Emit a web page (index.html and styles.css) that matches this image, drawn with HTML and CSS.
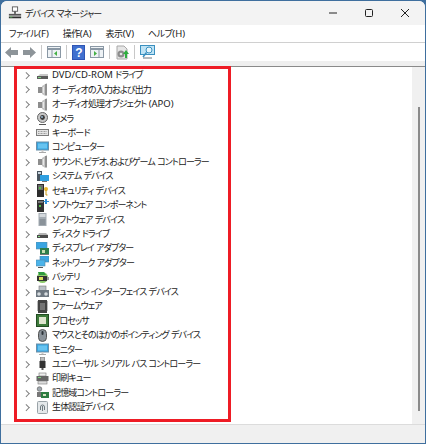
FILE: index.html
```html
<!DOCTYPE html>
<html lang="ja">
<head>
<meta charset="utf-8">
<title>デバイス マネージャー</title>
<link rel="stylesheet" href="styles.css">
</head>
<body>
<svg class="defs" width="0" height="0">
<defs>
<symbol id="i-drive" viewBox="0 0 13 13"><path d="M1 8l3-3h8v2z" fill="#c9c9c9"/><rect x="1" y="7" width="11" height="3" fill="#5c5c5c"/><rect x="2" y="8" width="3" height="1" fill="#7fd07f"/></symbol>
<symbol id="i-speaker" viewBox="0 0 13 13"><rect x="2" y="4" width="4" height="6" fill="#8d8d8d"/><path d="M6 3l5-3v14l-5-3z" fill="#c4c4c4"/><path d="M10 1v11" stroke="#6f6f6f" stroke-width="1.200"/><path d="M7.500 4v6" stroke="#e8e8e8"/></symbol>
<symbol id="i-camera" viewBox="0 0 13 13"><circle cx="6.500" cy="5.500" r="5" fill="#c8c8c8" stroke="#666"/><circle cx="6.500" cy="5.500" r="2.400" fill="#3a3a3a"/><circle cx="6" cy="5" r=".9" fill="#9fc3e0"/><path d="M3 12h7v1H3z" fill="#555"/></symbol>
<symbol id="i-keyboard" viewBox="0 0 13 13"><rect x=".5" y="3.500" width="12" height="6" fill="#e4e4e4" stroke="#7b7b7b"/><path d="M2 5.500h9M2 7.500h9" stroke="#9d9d9d" stroke-dasharray="1 .5"/></symbol>
<symbol id="i-monitor" viewBox="0 0 13 13"><rect x=".5" y="1" width="12" height="8" fill="#37a4e0" stroke="#6b8fa8"/><rect x="2" y="2.500" width="9" height="5" fill="#67c3f0"/><path d="M3 11h7v1H3z" fill="#a9a9a9"/><path d="M5.500 9h2v2h-2z" fill="#c9c9c9"/></symbol>
<symbol id="i-system" viewBox="0 0 13 13"><rect x="1" y="1" width="5" height="10" fill="#4a5560"/><rect x="2" y="2" width="3" height="2" fill="#c9d6df"/><rect x="4" y="5" width="9" height="6" fill="#2f9fe0"/><rect x="6" y="11" width="5" height="1" fill="#777"/></symbol>
<symbol id="i-security" viewBox="0 0 13 13"><rect x="1" y="0" width="7" height="13" fill="#2d2d2d"/><rect x="2" y="1" width="5" height="5" fill="#6c6c6c"/><rect x="3" y="3" width="2" height="2" fill="#55c04a"/><circle cx="10" cy="5" r="2" fill="#e7b52c"/><path d="M10 6v5h1.500" stroke="#c99a18" fill="none"/></symbol>
<symbol id="i-softcomp" viewBox="0 0 13 13"><rect x="1" y="1" width="7" height="12" fill="#333"/><rect x="2" y="2" width="5" height="2" fill="#777"/><rect x="3" y="6" width="2" height="2" fill="#55c04a"/><path d="M9 0h2v2h2v1h-2v2H9V3H7.500V2H9z" fill="#2f8fd8"/></symbol>
<symbol id="i-softdev" viewBox="0 0 13 13"><rect x="2.500" y="0" width="8" height="13" fill="#a3abb2"/><rect x="3.500" y="1" width="6" height="3" fill="#d3d8dc"/><rect x="3.500" y="6" width="6" height="6" fill="#8a9299"/></symbol>
<symbol id="i-disk" viewBox="0 0 13 13"><path d="M2 7l1-2h7l2 2z" fill="#b5b5b5"/><rect x="1" y="7" width="11" height="3" fill="#4b4b4b"/><rect x="2" y="8" width="2" height="1" fill="#86d886"/></symbol>
<symbol id="i-display" viewBox="0 0 13 13"><rect x="0" y="0" width="11" height="7" fill="#3aa5e2" stroke="#5d8aa6" stroke-width=".6"/><rect x="4" y="6" width="9" height="6" fill="#2e7d4a"/><rect x="6" y="8" width="3" height="3" fill="#c8dcb0"/><path d="M4 12h9v1H4z" fill="#777"/></symbol>
<symbol id="i-network" viewBox="0 0 13 13"><rect x="4" y="0" width="9" height="6" fill="#3aa5e2" stroke="#4f86a8" stroke-width=".6"/><rect x="0" y="4" width="9" height="6" fill="#4cb4ea" stroke="#4f86a8" stroke-width=".6"/><path d="M2 11h5v1H2z" fill="#555"/></symbol>
<symbol id="i-battery" viewBox="0 0 13 13"><circle cx="6.500" cy="6.500" r="5.500" fill="#8cc96b"/><path d="M2 1h6l2 3H3z" fill="#2f9a3e"/><rect x="1" y="5" width="10" height="5" fill="#333"/><rect x="11" y="6" width="2" height="3" fill="#999"/><rect x="3" y="6" width="4" height="3" fill="#d8e05a"/></symbol>
<symbol id="i-hid" viewBox="0 0 13 13"><rect x="3" y="1" width="7" height="5" fill="#b9c0c6" stroke="#777" stroke-width=".6"/><rect x="0" y="5" width="13" height="7" fill="#6d7780"/><circle cx="3" cy="9" r="1.800" fill="#d8dde0"/><circle cx="10" cy="9" r="1.800" fill="#d8dde0"/></symbol>
<symbol id="i-firmware" viewBox="0 0 13 13"><rect x="2" y="0" width="9" height="13" fill="#444"/><path d="M1 2h1M1 4h1M1 6h1M1 8h1M1 10h1M11 2h1M11 4h1M11 6h1M11 8h1M11 10h1" stroke="#777"/><rect x="4" y="3" width="5" height="7" fill="#757575"/></symbol>
<symbol id="i-cpu" viewBox="0 0 13 13"><rect x=".5" y=".5" width="12" height="12" fill="#3e7b3b" stroke="#224c22"/><rect x="3" y="3" width="7" height="7" fill="#dfe6cf"/></symbol>
<symbol id="i-mouse" viewBox="0 0 13 13"><rect x="2.500" y=".5" width="8" height="12" rx="4" fill="#8b939a" stroke="#555"/><rect x="5.500" y="2" width="2" height="4" rx="1" fill="#2c3338"/></symbol>
<symbol id="i-usb" viewBox="0 0 13 13"><rect x="4.500" y="0" width="4" height="4" fill="#bbb" stroke="#666" stroke-width=".6"/><rect x="3.500" y="4" width="6" height="7" fill="#333"/><rect x="5.500" y="11" width="2" height="2" fill="#555"/></symbol>
<symbol id="i-printer" viewBox="0 0 13 13"><rect x="3" y="1" width="7" height="3" fill="#eee" stroke="#777" stroke-width=".6"/><rect x=".5" y="4" width="12" height="5" fill="#666"/><rect x="2" y="5" width="3" height="1" fill="#7cd07c"/><rect x="2" y="9" width="9" height="3" fill="#ddd" stroke="#777" stroke-width=".6"/></symbol>
<symbol id="i-storage" viewBox="0 0 13 13"><circle cx="3.500" cy="3" r="2.300" fill="#a0a8ae" stroke="#555" stroke-width=".6"/><path d="M1 6h5v5H1z" fill="#777"/><rect x="5" y="6" width="8" height="6" fill="#2f7d42"/><rect x="7" y="8" width="3" height="2" fill="#d8e4c4"/></symbol>
<symbol id="i-bio" viewBox="0 0 13 13"><rect x="1.500" y=".5" width="10" height="12" rx="1" fill="#e4e8ea" stroke="#9aa3a8"/><path d="M4.500 9V6a2 2 0 0 1 4 0v3M6.500 5v5" stroke="#6f7a80" fill="none"/></symbol>
</defs>
</svg>
<div class="window">
  <header class="titlebar">
    <svg class="appicon" width="14" height="14" viewBox="0 0 16 16"><rect x="5" y="1" width="6" height="5" fill="#fff" stroke="#555"/><rect x="7" y="6" width="2" height="3" fill="#555"/><rect x="1" y="9" width="14" height="2" fill="#555"/><rect x="1" y="12" width="14" height="2" fill="#2f2f2f"/><rect x="2" y="12" width="3" height="1" fill="#6fcf6f"/></svg>
    <span class="title">デバイス マネージャー</span>
    <div class="winbtns">
      <svg width="10" height="10" viewBox="0 0 10 10"><path d="M1 5h8" stroke="#222" stroke-width="1"/></svg>
      <svg width="10" height="10" viewBox="0 0 10 10"><rect x="1.500" y="1.500" width="7" height="7" rx="1" fill="none" stroke="#222"/></svg>
      <svg width="10" height="10" viewBox="0 0 10 10"><path d="M1 1l8 8M9 1l-8 8" stroke="#222"/></svg>
    </div>
  </header>
  <nav class="menubar">
    <span>ファイル<b>(F)</b></span><span>操作<b>(A)</b></span><span>表示<b>(V)</b></span><span>ヘルプ<b>(H)</b></span>
  </nav>
  <div class="toolbar">
    <svg width="13" height="11" viewBox="0 0 13 11"><path d="M6 0v3h7v5H6v3L0 5.500z" fill="#8d9499"/></svg>
    <svg width="13" height="11" viewBox="0 0 13 11"><path d="M7 0v3H0v5h7v3l6-5.500z" fill="#8d9499"/></svg>
    <i class="sep"></i>
    <svg width="14" height="12" viewBox="0 0 14 12"><rect x=".5" y=".5" width="13" height="11" fill="#eef2f5" stroke="#8a98a5"/><path d="M1 3h12" stroke="#8a98a5" stroke-width="2"/><path d="M5 4v7" stroke="#8a98a5"/><path d="M10 5v5L7 7.500z" fill="#45b045"/></svg>
    <i class="sep"></i>
    <svg width="13" height="15" viewBox="0 0 13 15"><rect width="13" height="15" fill="#2f55b5"/><rect x="1" y="1" width="11" height="13" fill="#4070cf"/><text class="qmark" x="6.500" y="12" text-anchor="middle">?</text></svg>
    <svg width="14" height="12" viewBox="0 0 14 12"><rect x=".5" y=".5" width="13" height="11" fill="#eef2f5" stroke="#8a98a5"/><path d="M1 3h12" stroke="#8a98a5" stroke-width="2"/><path d="M9 4v7" stroke="#8a98a5"/><path d="M4 5v5l3-2.500z" fill="#45b045"/></svg>
    <i class="sep"></i>
    <svg width="14" height="15" viewBox="0 0 14 15"><path d="M2 1h7l3 3v10H2z" fill="#e6e6e6" stroke="#a8a8a8"/><circle cx="6" cy="9" r="3.500" fill="#8c8c8c"/><circle cx="6" cy="9" r="1.300" fill="#e6e6e6"/><path d="M11 5l3 4h-2v4h-2V9H8z" fill="#2fae3f"/></svg>
    <i class="sep"></i>
    <svg width="15" height="14" viewBox="0 0 15 14"><rect x=".5" y=".5" width="14" height="9" fill="#bfe3f5" stroke="#3a90c0"/><circle cx="9" cy="5" r="3" fill="#e8f6fc" stroke="#3a90c0"/><path d="M6.500 7.500L3 12" stroke="#3a90c0" stroke-width="1.500"/><path d="M3 13h9" stroke="#6b7780"/></svg>
  </div>
  <div class="strip"></div>
  <main class="content">
    <ul class="tree">
      <li><span class="chev"></span><svg class="ico"><use href="#i-drive"/></svg><span><b>DVD/CD-ROM</b> ドライブ</span></li>
      <li><span class="chev"></span><svg class="ico"><use href="#i-speaker"/></svg>オーディオの入力および出力</li>
      <li><span class="chev"></span><svg class="ico"><use href="#i-speaker"/></svg><span>オーディオ処理オブジェクト <b>(APO)</b></span></li>
      <li><span class="chev"></span><svg class="ico"><use href="#i-camera"/></svg>カメラ</li>
      <li><span class="chev"></span><svg class="ico"><use href="#i-keyboard"/></svg>キーボード</li>
      <li><span class="chev"></span><svg class="ico"><use href="#i-monitor"/></svg>コンピューター</li>
      <li><span class="chev"></span><svg class="ico"><use href="#i-speaker"/></svg>サウンド、ビデオ、およびゲーム コントローラー</li>
      <li><span class="chev"></span><svg class="ico"><use href="#i-system"/></svg>システム デバイス</li>
      <li><span class="chev"></span><svg class="ico"><use href="#i-security"/></svg>セキュリティ デバイス</li>
      <li><span class="chev"></span><svg class="ico"><use href="#i-softcomp"/></svg>ソフトウェア コンポーネント</li>
      <li><span class="chev"></span><svg class="ico"><use href="#i-softdev"/></svg>ソフトウェア デバイス</li>
      <li><span class="chev"></span><svg class="ico"><use href="#i-disk"/></svg>ディスク ドライブ</li>
      <li><span class="chev"></span><svg class="ico"><use href="#i-display"/></svg>ディスプレイ アダプター</li>
      <li><span class="chev"></span><svg class="ico"><use href="#i-network"/></svg>ネットワーク アダプター</li>
      <li><span class="chev"></span><svg class="ico"><use href="#i-battery"/></svg>バッテリ</li>
      <li><span class="chev"></span><svg class="ico"><use href="#i-hid"/></svg>ヒューマン インターフェイス デバイス</li>
      <li><span class="chev"></span><svg class="ico"><use href="#i-firmware"/></svg>ファームウェア</li>
      <li><span class="chev"></span><svg class="ico"><use href="#i-cpu"/></svg>プロセッサ</li>
      <li><span class="chev"></span><svg class="ico"><use href="#i-mouse"/></svg>マウスとそのほかのポインティング デバイス</li>
      <li><span class="chev"></span><svg class="ico"><use href="#i-monitor"/></svg>モニター</li>
      <li><span class="chev"></span><svg class="ico"><use href="#i-usb"/></svg>ユニバーサル シリアル バス コントローラー</li>
      <li><span class="chev"></span><svg class="ico"><use href="#i-printer"/></svg>印刷キュー</li>
      <li><span class="chev"></span><svg class="ico"><use href="#i-storage"/></svg>記憶域コントローラー</li>
      <li><span class="chev"></span><svg class="ico"><use href="#i-bio"/></svg>生体認証デバイス</li>
    </ul>
    <div class="scrollbar"><div class="thumb"></div></div>
    <div class="highlight"></div>
  </main>
  <footer class="status"></footer>
</div>
</body>
</html>
```
FILE: styles.css
```css
* { box-sizing: border-box; }
html, body { margin: 0; padding: 0; width: 426px; height: 444px; overflow: hidden; background: #3f6f9e; }
body { font-family: "Noto Sans CJK JP", "Noto Sans", sans-serif; font-feature-settings: "palt"; color: #1a1a1a; font-size: 9px; letter-spacing: -0.85px; word-spacing: 1px; }
b { font-weight: 400; font-size: 9.5px; letter-spacing: 0; word-spacing: 0; font-family: "Noto Sans", sans-serif; }
.defs { position: absolute; }
.window { width: 424px; height: 442px; margin: 1px; border-radius: 6px 6px 0 0; background: #f3f3f3; display: flex; flex-direction: column; overflow: hidden; }
.titlebar { height: 24px; flex: none; display: flex; align-items: center; padding-left: 7px; background: #f3f3f3; }
.appicon { margin-right: 3px; }
.title { font-size: 9px; }
.winbtns { margin-left: auto; display: flex; gap: 26px; padding-right: 15px; }
.menubar { height: 18px; flex: none; background: #fff; display: flex; gap: 14px; align-items: center; padding-left: 8px; border-bottom: 1px solid #d0d0d0; letter-spacing: -0.5px; }
.toolbar { height: 18px; flex: none; background: #fff; display: flex; align-items: center; gap: 5px; padding-left: 4px; }
.sep { width: 1px; height: 14px; background: #c8c8c8; }
.qmark { font: bold 12px "Liberation Sans", sans-serif; fill: #fff; }
.strip { height: 5px; flex: none; background: #efefef; }
.content { position: relative; flex: 1; display: flex; background: #fff; border-top: 1px solid #8a8a8a; min-height: 0; }
.tree { list-style: none; margin: 0; padding: 1px 0 0 23px; flex: 1; }
.tree li { height: 14.45px; display: flex; align-items: center; white-space: nowrap; line-height: 14px; }
.chev { width: 4.500px; height: 4.500px; border-top: 1px solid #808080; border-right: 1px solid #808080; transform: rotate(45deg); margin-right: 7.500px; flex: none; }
.ico { width: 13px; height: 13px; margin-right: 3px; flex: none; }
.scrollbar { width: 13px; flex: none; background: #f0f0f0; display: flex; justify-content: center; padding-top: 40px; padding-bottom: 13px; }
.thumb { width: 2px; background: #8a8a8a; }
.highlight { position: absolute; left: 13px; top: -1px; width: 217px; height: 356px; border: 3px solid #ee1c25; pointer-events: none; }
.status { height: 19px; flex: none; background: #f0f0f0; border-top: 1px solid #dcdcdc; }
```
